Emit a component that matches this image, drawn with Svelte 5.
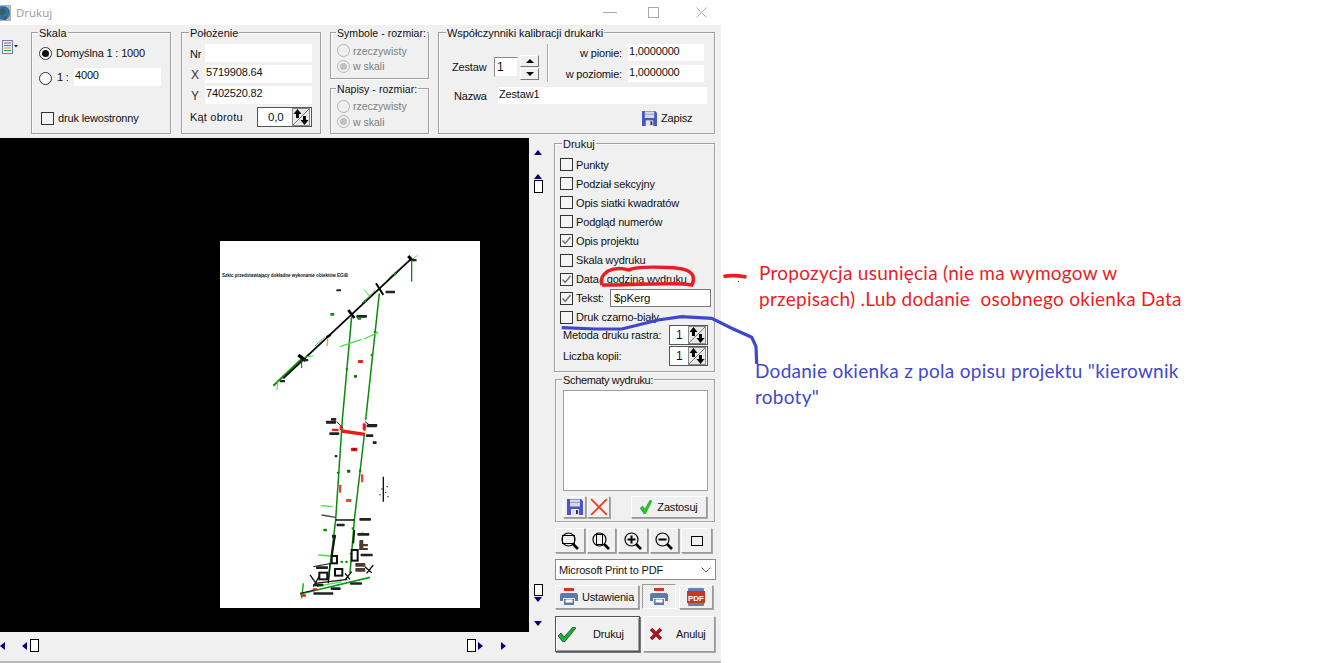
<script>
  const upper = [
    ['M175 437L262 355', '#0d8f0d', 6], ['M205 415L590 55', '#050505', 5.5],
    ['M300 318L330 290M440 190L480 152M520 115L560 80', '#0d8f0d', 2],
    ['M250 345L272 362', '#000', 10], ['M400 210L418 234', '#000', 8], ['M483 130L505 165', '#000', 6], ['M580 48L592 62', '#000', 9], ['M335 292L347 284', '#000', 7],
    ['M260 360L260 384', '#333', 3],
    ['M410 230L382 540', '#0a8a0a', 4.5], ['M493 160L452 540', '#0a8a0a', 4.5], ['M590 60L590 125', '#0a8a0a', 4],
    ['M447 148L465 170', '#45e045', 3], ['M375 320L440 298', '#45e045', 4], ['M447 297L490 277', '#45e045', 4], ['M188 425L186 450', '#45e045', 3], ['M268 352L295 347', '#45e045', 3], ['M590 60L607 46', '#45e045', 3],
    ['M338 295L336 318', '#e8a030', 4], ['M365 545L385 565', '#222', 3], ['M450 545L470 560', '#222', 3]
  ];
  const upperBlobs = [
    [364,148,14,6,'#222'],[512,152,28,8,'#222'],[424,225,32,8,'#222'],[195,420,15,7,'#222'],[265,357,15,7,'#222'],[590,57,15,7,'#222'],[333,543,30,8,'#222'],[348,534,16,8,'#222'],[457,552,30,8,'#222'],
    [537,99,7,7,'#0d8f0d'],[447,180,7,7,'#0d8f0d'],[392,384,7,7,'#0d8f0d'],[467,342,7,7,'#0d8f0d'],[477,272,7,7,'#0d8f0d'],[346,219,12,8,'#0d8f0d'],[427,231,12,8,'#0d8f0d'],[417,405,9,8,'#0d6f0d'],
    [429,360,15,9,'#f01c1c'],[374,556,8,14,'#f01c1c'],[443,550,9,20,'#f01c1c'],[350,566,20,4,'#f01c1c']
  ];
  const lower = [
    ['M215 33L285 43', '#f01818', 10], ['M217 0L197 300', '#0a8a0a', 4.5], ['M283 45L253 300', '#0a8a0a', 4.5], ['M197 300L175 480', '#0a8a0a', 4.5], ['M253 300L240 460', '#0a8a0a', 4.5],
    ['M155 285L197 292', '#444', 4], ['M197 300L253 300', '#111', 4.5], ['M153 257L188 260', '#45e045', 4], ['M340 170L340 245', '#111', 4],
    ['M195 345L185 410', '#111', 6], ['M253 330L250 370', '#111', 5],
    ['M90 522L300 472', '#0d9f0d', 5], ['M100 490L95 535', '#0d9f0d', 4], ['M145 405L180 408', '#45e045', 4], ['M140 500L215 485', '#45e045', 4], ['M120 465L145 500M150 465L130 500', '#111', 4], ['M225 460L240 478M245 455L225 480', '#111', 4], ['M285 440L305 458M310 435L290 460', '#111', 4],
    ['M135 490L232 478', '#111', 4], ['M180 430L175 490', '#111', 4], ['M268 345L280 335', '#45e045', 3], ['M90 520L135 510', '#111', 3], ['M130 440L185 430', '#111', 3]
  ];
  const lowerBlobs = [
    [168,2,30,8,'#222'],[178,37,30,8,'#222'],[290,14,30,8,'#222'],[288,43,22,8,'#222'],[186,27,20,6,'#f01818'],[280,12,7,20,'#f01818'],[308,64,12,8,'#222'],
    [243,83,19,11,'#e81818'],[249,85,7,6,'#500'],[273,163,7,24,'#f04040'],[207,194,7,24,'#f04040'],[228,237,16,9,'#f04040'],[194,105,8,7,'#222'],
    [201,155,7,7,'#0d8f0d'],[231,149,10,9,'#0d6f0d'],[267,149,7,7,'#0d8f0d'],[160,326,11,8,'#0d8f0d'],[245,322,7,7,'#0d8f0d'],[186,344,12,10,'#222'],[212,422,7,7,'#0d8f0d'],[226,422,7,7,'#0d8f0d'],[240,398,7,7,'#0d8f0d'],
    [268,294,35,8,'#222'],[200,311,24,8,'#222'],[262,339,36,8,'#222'],[272,401,36,8,'#222'],[138,439,36,8,'#222'],[130,491,30,8,'#222'],[182,502,30,8,'#222'],[130,517,60,7,'#222'],[240,487,36,7,'#222'],
    [268,360,12,30,'#4d3b2c'],[268,372,26,7,'#4d3b2c'],[268,384,26,6,'#4d3b2c'],[256,429,30,11,'#4d3b2c'],[256,444,30,11,'#4d3b2c'],[92,523,16,7,'#f01818'],[128,505,14,6,'#f01818'],
    [334,205,4,4,'#111'],[350,198,4,4,'#111'],[328,222,4,4,'#111'],[352,228,4,4,'#111'],[345,215,4,4,'#111']
  ];
  const buildings = [[185,408,16,22],[148,458,24,20],[195,447,22,20],[245,390,18,32]];
  const checks = [
    ['Punkty', false], ['Podział sekcyjny', false], ['Opis siatki kwadratów', false], ['Podgląd numerów', false],
    ['Opis projektu', true], ['Skala wydruku', false], ['Data i godzina wydruku', true]
  ];
</script>

{#snippet spin()}
  <svg class="spin-icon" viewBox="0 0 18 18" width="18" height="18">
    <rect x="0.5" y="0.5" width="17" height="17" fill="#e8e8e8" stroke="#8a8a8a" />
    <path d="M17 1L1 17" stroke="#777" fill="none" />
    <path d="M5.5 1L1.5 6H4V10H7V6H9.5ZM12.5 17L16.5 12H14V8H11V12H8.5Z" fill="#000" />
  </svg>
{/snippet}

{#snippet radio(on, off)}
  <span class="radio" class:off class:on></span>
{/snippet}

{#snippet box(on)}
  <span class="box">
    {#if on}<svg viewBox="0 0 13 13" width="13" height="13"><path d="M2.5 6.5L5.2 9.4L10.5 3" fill="none" stroke="#777" stroke-width="1.6" /></svg>{/if}
  </span>
{/snippet}

{#snippet floppy(s)}
  <svg viewBox="0 0 16 16" width={s} height={s}>
    <path d="M0 0H14L16 2V16H0Z" fill="#4a55c8" />
    <rect x="3" y="0.5" width="10" height="7" fill="#d8d8e4" />
    <rect x="3" y="3" width="10" height="1" fill="#9a9ab4" />
    <rect x="4" y="10" width="8" height="6" fill="#e4e4ee" />
    <rect x="9" y="11" width="2" height="4" fill="#333" />
  </svg>
{/snippet}

{#snippet printer(s)}
  <svg viewBox="0 0 18 17" width={s} height={s * 17 / 18}>
    <rect x="4" y="0" width="10" height="3" fill="#d4341a" />
    <path d="M2 5H16Q18 5 18 7V13H15V10H3V13H0V7Q0 5 2 5Z" fill="#5b7aa8" />
    <rect x="4" y="11" width="10" height="6" fill="#5b7aa8" />
    <rect x="5.5" y="11.5" width="7" height="3" fill="#fff" />
  </svg>
{/snippet}

{#snippet lens(kind)}
  <svg viewBox="0 0 18 18" width="18" height="18" fill="none" stroke="#000">
    <circle cx="7.5" cy="7.5" r="6.5" stroke-width="1.2" />
    {#if kind === 'wide'}<rect x="1.5" y="3.5" width="12" height="8" fill="none" />{/if}
    {#if kind === 'tall'}<rect x="4.5" y="2.5" width="6" height="10" fill="none" />{/if}
    {#if kind === 'plus'}<path d="M3.5 7.5H11.5M7.5 3.5V11.5" stroke-width="2" />{/if}
    {#if kind === 'minus'}<path d="M3.5 7.5H11.5" stroke-width="2" />{/if}
    <path d="M12 12L17 17" stroke-width="2.6" />
  </svg>
{/snippet}

<div class="page">
  <header class="title">
    <svg class="globe" viewBox="0 0 11 16" width="11" height="16">
      <rect x="0" y="0" width="11" height="16" fill="#aab4bc" />
      <circle cx="3" cy="8" r="7" fill="#2f6fae" />
      <path d="M0 5L4 3L6 7L3 10L0 9ZM4 12L7 11L6 15L4 15Z" fill="#3a5f55" />
    </svg>
    <span class="title-text">Drukuj</span>
    <span class="winctl">
      <svg viewBox="0 0 14 1" width="14" height="1"><path d="M0 .5H14" stroke="#a8a8a8" /></svg>
      <svg viewBox="0 0 11 11" width="11" height="11"><rect x=".5" y=".5" width="10" height="10" fill="none" stroke="#a8a8a8" /></svg>
      <svg viewBox="0 0 11 11" width="11" height="11"><path d="M.5 .5L10.5 10.5M10.5 .5L.5 10.5" stroke="#b0b0b0" fill="none" /></svg>
    </span>
  </header>

  <div class="window">
    <section class="top">
      <div class="tool">
        <svg viewBox="0 0 16 14" width="16" height="14">
          <rect x=".5" y=".5" width="10" height="13" fill="#eef2ff" stroke="#6a7fc0" />
          <path d="M2 3H9" stroke="#e04030" /><path d="M2 5.5H9" stroke="#30a040" /><path d="M2 8H9" stroke="#e09030" /><path d="M2 10.5H9" stroke="#30a040" />
          <path d="M12 5H16L14 7.5Z" fill="#222" />
        </svg>
      </div>

      <div class="group g-skala">
        <span class="legend">Skala</span>
        <div class="row s1">{@render radio(true, false)}<span class="ml4">Domyślna 1 : 1000</span></div>
        <div class="row s2">{@render radio(false, false)}<span class="ml5 w17">1 :</span><span class="field f87">4000</span></div>
        <div class="row s3">{@render box(false)}<span class="ml4">druk lewostronny</span></div>
      </div>

      <div class="group g-pol">
        <span class="legend">Położenie</span>
        <div class="pol-grid">
          <span class="lab">Nr</span><span class="field"></span>
          <span class="lab big">X</span><span class="field">5719908.64</span>
          <span class="lab big">Y</span><span class="field">7402520.82</span>
        </div>
        <div class="row kat"><span class="w67 wide">Kąt obrotu</span>
          <span class="spinbox sb55"><span class="val c">0,0</span>{@render spin()}</span>
        </div>
      </div>

      <div class="stack">
        <div class="group g-small">
          <span class="legend">Symbole - rozmiar:</span>
          <div class="row r15 first dis">{@render radio(false, true)}<span class="ml3">rzeczywisty</span></div>
          <div class="row r15 dis">{@render radio(true, true)}<span class="ml3">w skali</span></div>
        </div>
        <div class="group g-small">
          <span class="legend">Napisy - rozmiar:</span>
          <div class="row r15 first dis">{@render radio(false, true)}<span class="ml3">rzeczywisty</span></div>
          <div class="row r15 dis">{@render radio(true, true)}<span class="ml3">w skali</span></div>
        </div>
      </div>

      <div class="group g-cal">
        <span class="legend">Współczynniki kalibracji drukarki</span>
        <div class="cal-up">
          <div class="row zestaw">
            <span class="w42">Zestaw</span>
            <span class="zfield">1</span>
            <span class="updown">
              <span class="ud"><i class="tri up"></i></span>
              <span class="ud"><i class="tri dn"></i></span>
            </span>
          </div>
          <span class="sep"></span>
          <div class="cal-vals">
            <div class="row h17"><span class="rlab">w pionie:</span><span class="field f76">1,0000000</span></div>
            <div class="row h17 mt4"><span class="rlab">w poziomie:</span><span class="field f76">1,0000000</span></div>
          </div>
        </div>
        <div class="row nazwa"><span class="w44">Nazwa</span><span class="field f209">Zestaw1</span></div>
        <div class="row zapisz">{@render floppy(15)}<span class="ml4">Zapisz</span></div>
      </div>
    </section>

    <section class="mid">
      <div class="canvas">
        <div class="sheet">
          <svg viewBox="220 241 260 367" width="260" height="367">
            <text class="maptitle" x="222" y="277" textLength="126" lengthAdjust="spacingAndGlyphs">Szkic przedstawiający dokładne wykonanie obiektów EGiB</text>
            <g class="soft">
              <g transform="translate(215 240) scale(.3333)">
                {#each upper as [d, c, w]}<path {d} stroke={c} stroke-width={w} fill="none" />{/each}
                {#each upperBlobs as [x, y, w, h, c]}<rect {x} {y} width={w} height={h} rx="2" fill={c} />{/each}
              </g>
              <g transform="translate(270 420) scale(.3333)">
                {#each lower as [d, c, w]}<path {d} stroke={c} stroke-width={w} fill="none" />{/each}
                {#each lowerBlobs as [x, y, w, h, c]}<rect {x} {y} width={w} height={h} rx="2" fill={c} />{/each}
                {#each buildings as [x, y, w, h]}<rect {x} {y} width={w} height={h} fill="#fff" stroke="#111" stroke-width="6" />{/each}
              </g>
            </g>
          </svg>
        </div>
      </div>

      <div class="vscroll">
        <div class="vtop">
          <i class="arr a-up"></i>
          <i class="arr a-up mt19"></i>
          <i class="thumb"></i>
        </div>
        <div class="vbot">
          <i class="thumb v"></i>
          <i class="arr a-dn"></i>
          <i class="arr a-dn mt19"></i>
        </div>
      </div>

      <div class="side">
        <div class="group g-druk">
          <span class="legend">Drukuj</span>
          <div class="checks">
            {#each checks as [t, on]}
              <div class="row h19">{@render box(on)}<span class="ml3">{t}</span></div>
            {/each}
            <div class="row h19">{@render box(true)}<span class="ml3 w34">Tekst:</span><span class="tekst">$pKerg</span></div>
            <div class="row h19">{@render box(false)}<span class="ml3">Druk czarno-biały</span></div>
          </div>
          <div class="row metoda"><span class="grow">Metoda druku rastra:</span><span class="spinbox sb39"><span class="val">1</span>{@render spin()}</span></div>
          <div class="row liczba"><span class="grow">Liczba kopii:</span><span class="spinbox sb39"><span class="val">1</span>{@render spin()}</span></div>
        </div>

        <div class="group g-sch">
          <span class="legend">Schematy wydruku:</span>
          <div class="list"></div>
          <div class="row sch-btns">
            <button class="btn b23">{@render floppy(16)}</button>
            <button class="btn b23 ml1">
              <svg viewBox="0 0 16 16" width="18" height="18"><path d="M1 1L15 15M15 1L1 15" stroke="#e8401c" stroke-width="1.6" fill="none" /></svg>
            </button>
            <button class="btn zast">
              <svg viewBox="0 0 12 14" width="12" height="14"><path d="M0 8L3 6L5 9L10 0L12 1L5.5 14H4Z" fill="#27c42a" stroke="#138a16" stroke-width=".4" /></svg>
              <span>Zastosuj</span>
            </button>
          </div>
        </div>

        <div class="zooms">
          <button class="btn bz30">{@render lens('wide')}</button>
          <button class="btn bz30">{@render lens('tall')}</button>
          <button class="btn bz30">{@render lens('plus')}</button>
          <button class="btn bz30">{@render lens('minus')}</button>
          <button class="btn bz30 last"><svg viewBox="0 0 12 10" width="12" height="10"><rect x=".5" y=".5" width="11" height="9" fill="none" stroke="#000" /></svg></button>
        </div>

        <div class="select"><span>Microsoft Print to PDF</span>
          <svg viewBox="0 0 10 6" width="10" height="6"><path d="M.5 .5L5 5L9.5 .5" fill="none" stroke="#666" /></svg>
        </div>

        <div class="row print-row">
          <button class="btn ust">{@render printer(18)}<span>Ustawienia</span></button>
          <button class="btn pressed">{@render printer(18)}</button>
          <button class="btn pdf">
            <svg viewBox="0 0 18 18" width="18" height="18">
              <rect x="1" y="0" width="16" height="18" rx="1" fill="#6a7fa8" />
              <rect x="0" y="3" width="18" height="12" fill="#c8381a" />
              <text class="pdft" x="9" y="13" text-anchor="middle">PDF</text>
            </svg>
          </button>
        </div>

        <div class="row act-row">
          <button class="btn druk">
            <svg viewBox="0 0 18 15" width="18" height="15"><path d="M0 9L3 6L6 10L15 0L18 1L6.5 15H5Z" fill="#1fb224" stroke="#0c2a70" stroke-width=".7" /></svg>
            <span>Drukuj</span>
          </button>
          <button class="btn anul">
            <svg viewBox="0 0 14 14" width="14" height="14"><path d="M2 2L12 12M12 2L2 12" stroke="#a01820" stroke-width="3.6" fill="none" /></svg>
            <span>Anuluj</span>
          </button>
        </div>
      </div>
    </section>

    <section class="hscroll">
      <i class="arr a-lf"></i>
      <i class="arr a-lf ml18"></i><i class="thumb h"></i>
      <span class="grow"></span>
      <i class="thumb h"></i><i class="arr a-rt ml2"></i>
      <i class="arr a-rt ml18r"></i>
    </section>
  </div>

  <svg class="marks" viewBox="0 0 1327 663" width="1327" height="663">
    <path d="M601.7 285C600 280 601 276 608 271C614 268 622 268 629 270C634 267 655 267 668 267.5C680 268 690 269 693 276C694 280 693 283 692 285C680 283 665 284 655 284C640 284 620 285 602 285" fill="none" stroke="#ed1c24" stroke-width="3.4" />
    <path d="M723.5 276.5C730 275 738 275.5 746.5 277" fill="none" stroke="#ed1c24" stroke-width="3.6" />
    <rect x="738" y="281" width="1" height="1" fill="#333" />
    <path d="M561.7 327.7L595 329L621.7 329L638 325L658 320L681.7 316.7L711.7 318.3L731.7 328.3L751.7 337.3L756 346.7L756.7 364" fill="none" stroke="#3f48cc" stroke-width="3.2" />
  </svg>

  <div class="note red">Propozycja usunięcia (nie ma wymogow w<br />przepisach) .Lub dodanie&nbsp; osobnego okienka Data</div>
  <div class="note blue">Dodanie okienka z pola opisu projektu "kierownik<br />roboty"</div>
</div>

<style>
  :global(body) { margin: 0; background: #fff; }
  * { box-sizing: border-box; }
  .page { position: relative; width: 1327px; height: 663px; overflow: hidden; font: 11px "Liberation Sans", Arial, sans-serif; letter-spacing: -.16px; color: #111; }
  i { display: block; }

  .title { height: 25px; width: 720px; display: flex; align-items: center; background: #fff; }
  .globe { margin-right: 5px; }
  .title-text { font: 11.5px "Open Sans", sans-serif; color: #999; letter-spacing: 0; }
  .winctl { margin-left: auto; display: flex; align-items: center; gap: 31px; margin-right: 13px; height: 19px; }
  .winctl svg:nth-child(3) { margin-left: 6px; }

  .window { width: 721px; height: 638px; background: #f0f0f0; border-bottom: 2px solid #b8b8b8; }

  .top { display: flex; height: 113px; padding-top: 7px; }
  .tool { width: 31px; padding: 8px 0 0 2px; }

  .group { border: 1px solid #a0a0a0; box-shadow: 1px 1px 0 #fafafa, inset 1px 1px 0 #fafafa; }
  .legend { display: block; width: fit-content; height: 14px; line-height: 14px; margin: -7px 0 0 -1px; padding: 0 1px; background: #f0f0f0; white-space: nowrap; letter-spacing: 0; }

  .row { display: flex; align-items: center; white-space: nowrap; }
  .ml1 { margin-left: 1px; } .ml3 { margin-left: 3px; } .ml4 { margin-left: 4px; } .ml5 { margin-left: 5px; }
  .w17 { width: 17px; } .w34 { width: 34px; flex: none; } .w42 { width: 42px; } .w44 { width: 44px; } .w67 { width: 67px; }
  .wide { letter-spacing: .2px; }
  .h17 { height: 17px; } .h19 { height: 19.12px; } .mt4 { margin-top: 4px; }
  .grow { flex: 1; }

  .field { display: flex; align-items: flex-start; background: #fff; height: 18px; padding: 1px 1px 0; line-height: 13px; }
  .f87 { width: 87px; } .f76 { width: 76px; height: 17px; padding-left: 1px; } .f209 { width: 209px; height: 17px; }

  .radio { display: block; flex: none; width: 13px; height: 13px; border-radius: 50%; border: 1px solid #333; background: #fff; position: relative; }
  .radio.on::after { content: ""; position: absolute; inset: 2px; border-radius: 50%; background: #111; }
  .radio.off { border-color: #b4b4b4; background: #f0f0f0; }
  .radio.off.on::after { background: #c0c0c0; }
  .box { display: block; flex: none; width: 13px; height: 13px; border: 1px solid #333; background: #f4f4f4; }
  .box svg { display: block; margin: -1px; }

  .g-skala { width: 140px; height: 102px; margin-right: 10px; padding-left: 7px; }
  .s1 { height: 16px; margin-top: 5px; }
  .s2 { height: 18px; margin-top: 7px; }
  .s2 .radio { margin-top: 2px; }
  .s3 { height: 14px; margin-top: 25px; margin-left: 2px; }

  .g-pol { width: 140px; height: 102px; margin-right: 9px; padding-left: 8px; }
  .pol-grid { display: grid; grid-template-columns: 15px 107px; grid-auto-rows: 18px; row-gap: 3px; margin-top: 4px; }
  .lab { line-height: 18px; padding-top: 1px; }
  .lab.big { font-size: 12px; padding-top: 1px; padding-left: 1px; color: #333; }
  .kat { margin-top: 3px; height: 20px; }
  .spinbox { display: flex; align-items: center; justify-content: space-between; height: 20px; background: #fff; border: 1px solid #555; padding-right: 1px; }
  .sb55 { width: 55px; } .sb39 { width: 39px; }
  .val { font-size: 12px; padding-left: 6px; }
  .val.c { padding-left: 10px; font-size: 11.5px; }
  .spin-icon { display: block; flex: none; }

  .stack { width: 99px; margin-right: 9px; display: flex; flex-direction: column; gap: 9px; }
  .g-small { height: 46.5px; padding-left: 6px; }
  .r15 { height: 15.5px; }
  .first { margin-top: 3px; }
  .dis { color: #7d7d7d; font-size: 10.5px; letter-spacing: 0; }
  .g-small .legend { font-size: 10.5px; letter-spacing: .05px; }

  .g-cal { width: 277px; height: 102px; padding-left: 13px; }
  .g-cal .legend { margin-left: -6px; letter-spacing: -.05px; }
  .cal-up { display: flex; margin-top: 4px; height: 38px; }
  .zestaw { height: 26px; margin-top: 10px; width: 95px; }
  .zfield { width: 24px; height: 20px; background: #fff; border: 1px solid #888; border-right-color: #eee; border-bottom-color: #eee; padding-left: 2px; font-size: 12px; line-height: 18px; }
  .updown { display: flex; flex-direction: column; margin-left: 2px; gap: 1px; }
  .ud { display: flex; align-items: center; justify-content: center; width: 19px; height: 12px; background: #f0f0f0; border: 1px solid; border-color: #fff #777 #777 #fff; }
  .tri { width: 0; height: 0; border-left: 4px solid transparent; border-right: 4px solid transparent; }
  .tri.up { border-bottom: 4px solid #000; }
  .tri.dn { border-top: 4px solid #000; }
  .sep { width: 2px; height: 38px; background: #a8a8a8; border-right: 1px solid #fff; }
  .cal-vals { width: 155px; }
  .rlab { width: 79px; text-align: right; padding-right: 6px; }
  .nazwa { margin-top: 5px; padding-left: 2px; height: 17px; }
  .zapisz { margin: 6px 0 0 190px; height: 16px; }

  .mid { display: flex; height: 494px; }
  .canvas { width: 529px; height: 494px; background: #000; padding: 103px 0 0 220px; }
  .sheet { width: 260px; height: 367px; background: #fff; }
  .sheet svg { display: block; }
  .soft { filter: blur(.3px); }
  .maptitle { font: bold 5.6px "Liberation Sans", sans-serif; fill: #111; letter-spacing: 0; }

  .vscroll { width: 25px; display: flex; flex-direction: column; justify-content: space-between; padding: 12px 0 6px 5px; height: 494px; }
  .arr { width: 0; height: 0; }
  .a-up { border-left: 4.5px solid transparent; border-right: 4.5px solid transparent; border-bottom: 5px solid #000080; }
  .a-dn { border-left: 4.5px solid transparent; border-right: 4.5px solid transparent; border-top: 5px solid #000080; }
  .a-lf { border-top: 4.5px solid transparent; border-bottom: 4.5px solid transparent; border-right: 5px solid #000080; }
  .a-rt { border-top: 4.5px solid transparent; border-bottom: 4.5px solid transparent; border-left: 5px solid #000080; }
  .mt19 { margin-top: 19px; }
  .thumb { width: 9px; height: 13px; margin-top: 1px; background: #fff; border: 1px solid #000; }
  .thumb.v { margin: 0 0 1px; height: 12px; }
  .thumb.h { width: 9px; height: 13px; margin: 0 0 0 3px; }

  .side { width: 162px; padding-top: 5px; }
  .g-druk { width: 161px; height: 229px; padding-left: 5px; }
  .g-druk .legend { margin-left: 2px; }
  .checks { padding-top: 4px; }
  .tekst { flex: none; width: 101px; height: 18px; background: #fff; border: 1px solid #777; padding-left: 3px; line-height: 16px; font-size: 11.5px; }
  .metoda { margin: -2px 6px 0 3px; height: 20px; }
  .liczba { margin: 1px 6px 0 3px; height: 20px; }

  .g-sch { width: 160px; height: 143px; margin: 7px 0 0 1px; padding-left: 7px; }
  .g-sch .legend { letter-spacing: -.35px; }
  .list { width: 145px; height: 101px; margin-top: 3px; background: #fff; border: 1px solid #a0a0a0; }
  .sch-btns { margin-top: 4px; height: 23px; }

  .btn { display: flex; align-items: center; justify-content: center; padding: 0; font: inherit; letter-spacing: inherit; color: #111; background: #f0f0f0; border: 1px solid; border-color: #fff #9a9a9a #9a9a9a #fff; box-shadow: 1px 1px 0 #a8a8a8; }
  .b23 { width: 23px; height: 22px; }
  .zast { width: 76px; height: 22px; margin-left: 21px; gap: 5px; }

  .zooms { display: flex; gap: 2px; margin: 6px 0 0 1px; height: 26px; }
  .bz30 { width: 29.5px; height: 25px; }
  .bz30.last { width: 31px; }

  .select { display: flex; align-items: center; justify-content: space-between; width: 161px; height: 21px; margin: 5px 0 0 1px; padding: 0 4px 0 3px; background: #fff; border: 1px solid #8a8a8a; }

  .print-row { margin: 4px 0 0 1px; height: 25px; }
  .ust { width: 84px; height: 24px; gap: 4px; }
  .pressed { width: 34px; height: 25px; margin-left: 3px; border-color: #9a9a9a #fff #fff #9a9a9a; box-shadow: none; background: repeating-conic-gradient(#f8f8f8 0 25%, #e8e8e8 0 50%) 0 0 / 2px 2px; }
  .pdf { width: 34px; height: 24px; margin-left: 3px; }
  .pdft { font: bold 8px "Liberation Sans", sans-serif; fill: #fff; letter-spacing: 0; }

  .act-row { margin: 7px 0 0 1px; height: 36px; }
  .druk { width: 85px; height: 36px; justify-content: flex-start; padding-left: 2px; border: 1px solid #555; box-shadow: inset 1px 1px 0 #fff, inset -1px -1px 0 #a0a0a0, 1px 1px 0 #777; }
  .druk span { margin-left: 17px; }
  .anul { width: 72px; height: 36px; margin-left: 3px; justify-content: flex-start; padding-left: 5px; }
  .anul span { margin-left: 13px; }

  .hscroll { display: flex; align-items: center; width: 506px; padding: 5px 0 0 0; height: 22px; }
  .ml18 { margin-left: 17px; } .ml2 { margin-left: 2px; } .ml18r { margin-left: 18px; }

  .marks { position: absolute; left: 0; top: 0; pointer-events: none; }
  .note { position: absolute; left: 759px; font: 19px/26px Lato, sans-serif; letter-spacing: .27px; white-space: nowrap; }
  .red { top: 260px; color: #ed1c24; }
  .blue { top: 358px; left: 755px; color: #3f48cc; }
</style>
